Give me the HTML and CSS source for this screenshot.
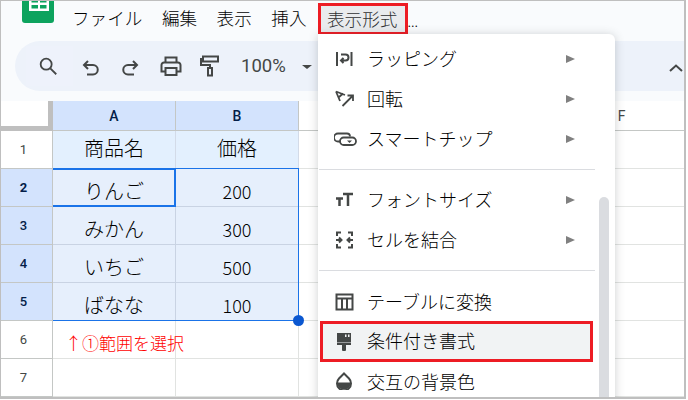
FILE: index.html
```html
<!DOCTYPE html>
<html lang="ja">
<head>
<meta charset="utf-8">
<title>表示形式</title>
<link rel="stylesheet" href="styles.css">
</head>
<body>
<div class="frame">
  <header class="menubar">
    <svg class="logo" width="32" height="23" viewBox="0 0 32 23">
      <path d="M0 0h32v20a3 3 0 0 1-3 3H3a3 3 0 0 1-3-3z" fill="#0da35e"/>
      <path d="M7 0h20v11H7z" fill="#fff"/>
      <path d="M9.500 0h6.500v2.500h-6.500zM18 0h6.500v2.500H18zM9.500 5h6.500v3.500h-6.500zM18 5h6.500v3.500H18z" fill="#0da35e"/>
    </svg>
    <nav class="menus">
      <span>ファイル</span><span>編集</span><span>表示</span><span>挿入</span>
      <span class="trigger">表示形式</span>
      <span class="more">...</span>
    </nav>
  </header>

  <div class="toolbar">
    <div class="search-btn">
      <svg class="tool" width="24" height="24" viewBox="0 0 24 24"><circle cx="10" cy="10" r="6" class="ln"/><path d="M14.500 14.500L21 21" class="ln"/></svg>
    </div>
    <svg class="tool undo" width="20" height="20" viewBox="0 0 20 20"><path d="M7 3L3 7l4 4M3 7h9a4.500 4.500 0 0 1 0 9.500H6" class="ln"/></svg>
    <svg class="tool redo" width="20" height="20" viewBox="0 0 20 20"><path d="M13 3l4 4-4 4M17 7H8a4.500 4.500 0 0 0 0 9.500h6" class="ln"/></svg>
    <svg class="tool print" width="24" height="24" viewBox="0 0 24 24"><path d="M6.500 8V3.500h11V8M6.500 17.500H2.500V11a2.500 2.500 0 0 1 2.500-2.500h14a2.500 2.500 0 0 1 2.500 2.500v6.500h-4M6.500 14h11v7h-11z" class="ln"/></svg>
    <svg class="tool roller" width="20" height="22" viewBox="0 0 20 22"><path d="M3 1.500h15v5H3zM3 4H1v6h9v3M8 13h4v7.500H8z" class="ln"/></svg>
    <span class="zoom">100%</span>
    <span class="caret"></span>
    <svg class="chevron" width="14" height="8" viewBox="0 0 14 8"><path d="M1 7l6-5.500L13 7" class="ln"/></svg>
  </div>

  <main class="sheet">
    <div class="corner"></div>
    <div class="col sel">A</div>
    <div class="col sel">B</div>
    <div class="col"></div>
    <div class="col"></div>
    <div class="col fcol">F</div>

    <div class="row">1</div>
    <div class="cell hd">商品名</div><div class="cell hd">価格</div><div class="cell"></div><div class="cell"></div><div class="cell"></div>

    <div class="row on first">2</div>
    <div class="cell s">りんご</div><div class="cell s num">200</div><div class="cell"></div><div class="cell"></div><div class="cell"></div>

    <div class="row on">3</div>
    <div class="cell s">みかん</div><div class="cell s num">300</div><div class="cell"></div><div class="cell"></div><div class="cell"></div>

    <div class="row on">4</div>
    <div class="cell s">いちご</div><div class="cell s num">500</div><div class="cell"></div><div class="cell"></div><div class="cell"></div>

    <div class="row on">5</div>
    <div class="cell s">ばなな</div><div class="cell s num">100</div><div class="cell"></div><div class="cell"></div><div class="cell"></div>

    <div class="row">6</div>
    <div class="cell note">↑①範囲を選択</div><div class="cell"></div><div class="cell"></div><div class="cell"></div><div class="cell"></div>

    <div class="row">7</div>
    <div class="cell"></div><div class="cell"></div><div class="cell"></div><div class="cell"></div><div class="cell"></div>

    <div class="selection"><span class="handle"></span></div>
    <div class="active"></div>
  </main>

  <aside class="menu">
    <div class="item">
      <svg class="ico" width="18" height="18" viewBox="0 0 18 18"><path d="M2 2v14M16.500 2v14M6 4.500h4.500a2.500 2.500 0 0 1 0 6H6M8.500 8L6 10.500 8.500 13" class="ln"/></svg>
      <span class="lbl">ラッピング</span><i class="arrow"></i>
    </div>
    <div class="item">
      <svg class="ico" width="20" height="18" viewBox="0 0 20 18"><path d="M1 1.500l9 3.500M1 1.500l4 9.500M3.500 7.500L8 3.500" class="ln thin"/><path d="M7.500 16L17.500 6M18 11V5.500h-5.500" class="ln thin"/></svg>
      <span class="lbl">回転</span><i class="arrow"></i>
    </div>
    <div class="item">
      <svg class="ico wide" width="23" height="14" viewBox="0 0 23 14"><path d="M6.500 9.500H4a3 3 0 0 1 0-8h9a3 3 0 0 1 3 3" class="ln thin"/><rect x="6" y="5.500" width="16" height="7.500" rx="3.700" class="ln thin"/><path d="M13 8.500h5l-2.500 2.500z" class="fl"/></svg>
      <span class="lbl">スマートチップ</span><i class="arrow"></i>
    </div>
    <div class="sep"></div>
    <div class="item">
      <svg class="ico" width="18" height="16" viewBox="0 0 18 16"><path d="M1 6.500h7M4.500 6.500V14M8 2h10M13 2v12" class="ln thick"/></svg>
      <span class="lbl">フォントサイズ</span><i class="arrow"></i>
    </div>
    <div class="item">
      <svg class="ico" width="19" height="18" viewBox="0 0 19 18"><path d="M2 5V1.500h4M13 1.500h4V5M2 13v3.500h4M13 16.500h4V13M1 9h5M4 6.500L6.500 9 4 11.500M18 9h-5M15 6.500L12.500 9l2.500 2.500" class="ln"/></svg>
      <span class="lbl">セルを結合</span><i class="arrow"></i>
    </div>
    <div class="sep sep2"></div>
    <div class="item">
      <svg class="ico" width="19" height="18" viewBox="0 0 19 18"><path d="M1.500 1.500h16v15h-16zM1.500 5.500h16M7 5.500v11M12 5.500v11" class="ln"/></svg>
      <span class="lbl">テーブルに変換</span>
    </div>
    <div class="item picked">
      <svg class="ico" width="18" height="19" viewBox="0 0 18 19"><path d="M2 1h14v9H2zM2 10.500h14v2.500H2zM7 13h4v5a1 1 0 0 1-1 1H8a1 1 0 0 1-1-1z" class="fl"/><path d="M10 2.500h1.500v2.500H10zM13 2.500h1.500v2.500H13z" fill="#f1f3f4"/></svg>
      <span class="lbl">条件付き書式</span>
    </div>
    <div class="item last">
      <svg class="ico" width="18" height="18" viewBox="0 0 18 18"><path d="M9 1.500L14 6.500a7 7 0 1 1-10 0z" class="ln"/><path d="M2 10.500h14a7 7 0 0 1-14 0z" class="fl"/></svg>
      <span class="lbl">交互の背景色</span>
    </div>
    <div class="scrollbar"></div>
  </aside>
</div>
</body>
</html>
```
FILE: styles.css
```css
* { box-sizing: border-box; }
html, body { margin: 0; background: #fff; }
body { font-family: "Noto Sans CJK JP", "Noto Sans", sans-serif; font-weight: 300; }

.frame {
  position: relative;
  width: 686px;
  height: 399px;
  overflow: hidden;
  background: #f9fbfd;
  border: 1px solid #bfbfbf;
  border-bottom-width: 2px;
  border-right-width: 2px;
}

.ln { fill: none; stroke: #444746; stroke-width: 2; }
.ln.thick { stroke-width: 2.500; }
.ln.thin { stroke-width: 1.800; }
.fl { fill: #444746; }

/* menu bar */
.menubar { display: flex; height: 40px; padding-left: 21px; }
.logo { flex: none; margin-top: -1px; }
.menus {
  display: flex;
  gap: 19.500px;
  margin-left: 18px;
  font-size: 17.600px;
  line-height: 26px;
  color: #000;
  align-items: flex-start;
  padding-top: 4px;
}
.trigger {
  margin: -2px -11px 0 -8px;
  width: 90px;
  height: 32px;
  padding-left: 6px;
  line-height: 26px;
  border: 3px solid #ed1c24;
  background: #e9ebee;
  color: #303133;
  white-space: nowrap;
}
.more { font-size: 14px; line-height: 32px; margin-left: -9px; }

/* toolbar */
.toolbar {
  display: flex;
  align-items: center;
  height: 50px;
  margin-left: 14px;
  padding-left: 11px;
  background: #edf2fa;
  border-radius: 25px 0 0 25px;
}
.search-btn {
  display: flex;
  align-items: center;
  justify-content: center;
  width: 47px;
  height: 40px;
  background: #eef2fb;
}
.tool { flex: none; }
.search-btn .tool { margin: -1px 0 0 -3px; width: 22px; height: 22px; }
.undo { margin: 4px 0 0 8px; }
.redo { margin: 4px 0 0 19px; }
.print { margin: 0 0 0 19px; }
.roller { margin: 0 0 0 17px; }
.zoom { margin-left: 21px; font: 400 18.500px "Roboto", sans-serif; color: #444746; }
.caret {
  margin: 2px 0 0 16px;
  border-left: 5px solid transparent;
  border-right: 5px solid transparent;
  border-top: 4px solid #444746;
}
.chevron { margin-left: auto; margin-right: 1px; margin-top: 3px; }

/* sheet */
.sheet {
  position: relative;
  display: grid;
  grid-template-columns: 53px 123px 123px 123px 123px 153px;
  grid-template-rows: 30px repeat(7, 38px);
  margin: 10px 0 0 -1px;
  background: #fff;
}
.corner { background: #fff; border-right: 5px solid #bfbfbf; border-bottom: 5px solid #bfbfbf; }
.col {
  display: flex;
  align-items: center;
  justify-content: center;
  font: 500 14px "Roboto", sans-serif;
  color: #041e49;
  border-right: 1px solid #c4c7c5;
  border-bottom: 1px solid #c4c7c5;
  background: #fff;
}
.col.sel { background: #d3e3fd; }
.fcol { font-weight: 400; color: #444746; border-right: 0; }
.row {
  display: flex;
  align-items: center;
  justify-content: center;
  padding: 0 5px 1px 0;
  font: 400 13px "Roboto", sans-serif;
  color: #444746;
  border-right: 1px solid #c4c7c5;
  border-bottom: 1px solid #c4c7c5;
  background: #fff;
}
.row.on { background: #d3e3fd; color: #041e49; font-weight: 500; }
.row.first { font-weight: 700; }
.cell {
  display: flex;
  align-items: center;
  justify-content: center;
  font-size: 20px;
  color: #000;
  border-right: 1px solid #e1e3e1;
  border-bottom: 1px solid #e1e3e1;
  min-width: 0;
}
.cell.hd { background: #e3f0fe; border-color: #d3dbe8; padding-bottom: 4px; }
.cell.s { background: #e6effc; border-color: #c9d3e3; padding-top: 5px; }
.cell.num { font-size: 18px; padding-top: 7px; }
.cell.note {
  justify-content: flex-start;
  padding: 5px 0 0 12px;
  font-size: 17px;
  color: #f00;
  white-space: nowrap;
  overflow: visible;
}

.selection, .active { position: absolute; top: -1px; left: 0; right: 0; bottom: 0; }
.selection {
  grid-column: 2 / 4;
  grid-row: 3 / 7;
  border: 1px solid #1a73e8;
  border-left: 0;
}
.active {
  grid-column: 2 / 3;
  grid-row: 3 / 4;
  border: 2px solid #1a73e8;
  border-left: 0;
}
.handle {
  position: absolute;
  right: -6px;
  bottom: -6px;
  width: 11px;
  height: 11px;
  border-radius: 50%;
  background: #0b57d0;
}

/* dropdown */
.menu {
  position: absolute;
  left: 317px;
  top: 33px;
  width: 297px;
  height: 380px;
  padding-top: 5px;
  background: #fff;
  border-radius: 0 6px 6px 6px;
  box-shadow: 0 1px 10px rgba(60, 64, 67, .25);
  z-index: 2;
}
.item {
  position: relative;
  display: flex;
  align-items: center;
  width: 276px;
  height: 40px;
  padding-left: 17px;
  font-size: 18px;
  color: #000;
}
.ico { flex: none; margin-right: 14px; }
.ico.wide { margin-left: -1px; margin-right: 11px; }
.lbl { position: absolute; left: 49px; top: 6px; line-height: 26px; white-space: nowrap; }
.arrow {
  position: absolute;
  left: 248px;
  top: 16px;
  border-left: 9px solid #808080;
  border-top: 4.500px solid transparent;
  border-bottom: 4.500px solid transparent;
}
.sep { height: 21px; width: 276px; margin-left: 1px; position: relative; }
.sep::after {
  content: "";
  position: absolute;
  left: 0; right: 0; top: 10px;
  border-top: 1px solid #dadce0;
}
.sep2 { height: 22px; }
.picked {
  margin-left: 2px;
  width: 273px;
  height: 41px;
  margin-top: -1px;
  padding-left: 15px;
  background: #f1f3f4;
  border: 3px solid #ed1c24;
}
.picked .lbl { left: 44px; top: 3px; }
.picked .ico { margin-left: -3px; }
.last { height: 38px; }
.scrollbar {
  position: absolute;
  left: 281px;
  top: 163px;
  width: 10px;
  height: 240px;
  background: #dadce0;
  border-radius: 5px 5px 0 0;
}
```
